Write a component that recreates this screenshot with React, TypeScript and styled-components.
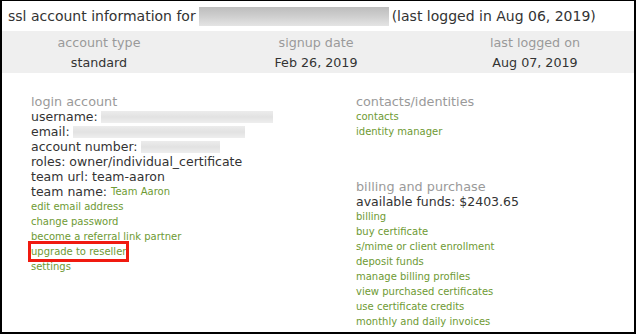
import React from "react";
import styled, { createGlobalStyle } from "styled-components";

const GlobalStyle = createGlobalStyle`
  html, body { margin: 0; padding: 0; background: #ffffff; }
  body { font-family: "DejaVu Sans", "Liberation Sans", sans-serif; }
`;

const Frame = styled.div`
  box-sizing: border-box;
  width: 636px;
  height: 334px;
  border-top: 1px solid #000;
  border-left: 2px solid #000;
  border-right: 2px solid #000;
  border-bottom: 2px solid #000;
  background: #fff;
  overflow: hidden;
  color: #333;
`;

const TitleBar = styled.div`
  height: 30px;
  display: flex;
  align-items: center;
  padding-left: 6px;
  font-size: 14px;
  color: #333;
  white-space: nowrap;
`;

const Redacted = styled.span<{ $w: number; $h: number; $soft?: boolean }>`
  display: inline-block;
  width: ${(p) => p.$w}px;
  height: ${(p) => p.$h}px;
  vertical-align: middle;
  margin: 0 3px;
  background: ${(p) =>
    p.$soft
      ? "linear-gradient(180deg, #ececec 0%, #e2e2e2 50%, #eeeeee 100%)"
      : "linear-gradient(180deg, #bdbdbd 0%, #cdcdcd 45%, #e4e4e4 100%)"};
`;

const StatsBand = styled.div`
  background: #efefef;
  height: 42px;
  display: grid;
  grid-template-columns: 194px 240px 1fr;
  align-content: center;
  row-gap: 3px;
`;

const StatCell = styled.div<{ $head?: boolean }>`
  text-align: center;
  font-size: 12.7px;
  line-height: 17px;
  color: ${(p) => (p.$head ? "#9a9a9a" : "#333")};
`;

const Body = styled.div`
  display: grid;
  grid-template-columns: 325px 1fr;
  padding: 21px 0 0 29px;
`;

const Column = styled.div`
  display: flex;
  flex-direction: column;
`;

const Section = styled.div<{ $gap?: number }>`
  display: flex;
  flex-direction: column;
  margin-top: ${(p) => p.$gap ?? 0}px;
`;

const SectionTitle = styled.div`
  font-size: 12.8px;
  line-height: 15px;
  color: #9a9a9a;
`;

const Line = styled.div`
  font-size: 12.5px;
  line-height: 15px;
  color: #333;
  white-space: nowrap;
  display: flex;
  align-items: center;
`;

const LinkLine = styled.a<{ $boxed?: boolean }>`
  font-size: 10px;
  line-height: 15px;
  color: #6e9a33;
  text-decoration: none;
  white-space: nowrap;
  align-self: flex-start;
  ${(p) => (p.$boxed ? `outline: 3px solid #f01a10; outline-offset: 0px;` : "")}
`;

const InlineLink = styled.span`
  font-size: 10px;
  color: #6e9a33;
  margin-left: 4px;
`;

export default function App() {
  return (
    <>
      <GlobalStyle />
      <Frame>
        <TitleBar>
          ssl account information for
          <Redacted $w={190} $h={19} />
          (last logged in Aug 06, 2019)
        </TitleBar>
        <StatsBand>
          <StatCell $head>account type</StatCell>
          <StatCell $head>signup date</StatCell>
          <StatCell $head>last logged on</StatCell>
          <StatCell>standard</StatCell>
          <StatCell>Feb 26, 2019</StatCell>
          <StatCell>Aug 07, 2019</StatCell>
        </StatsBand>
        <Body>
          <Column>
            <SectionTitle>login account</SectionTitle>
            <Line>
              username:<Redacted $w={172} $h={12} $soft />
            </Line>
            <Line>
              email:<Redacted $w={172} $h={12} $soft />
            </Line>
            <Line>
              account number:<Redacted $w={79} $h={12} $soft />
            </Line>
            <Line>roles: owner/individual_certificate</Line>
            <Line>team url: team-aaron</Line>
            <Line>
              team name:<InlineLink>Team Aaron</InlineLink>
            </Line>
            <LinkLine href="#">edit email address</LinkLine>
            <LinkLine href="#">change password</LinkLine>
            <LinkLine href="#">become a referral link partner</LinkLine>
            <LinkLine href="#" $boxed>upgrade to reseller</LinkLine>
            <LinkLine href="#">settings</LinkLine>
          </Column>
          <Column>
            <Section>
              <SectionTitle>contacts/identities</SectionTitle>
              <LinkLine href="#">contacts</LinkLine>
              <LinkLine href="#">identity manager</LinkLine>
            </Section>
            <Section $gap={40}>
              <SectionTitle>billing and purchase</SectionTitle>
              <Line>available funds: $2403.65</Line>
              <LinkLine href="#">billing</LinkLine>
              <LinkLine href="#">buy certificate</LinkLine>
              <LinkLine href="#">s/mime or client enrollment</LinkLine>
              <LinkLine href="#">deposit funds</LinkLine>
              <LinkLine href="#">manage billing profiles</LinkLine>
              <LinkLine href="#">view purchased certificates</LinkLine>
              <LinkLine href="#">use certificate credits</LinkLine>
              <LinkLine href="#">monthly and daily invoices</LinkLine>
            </Section>
          </Column>
        </Body>
      </Frame>
    </>
  );
}
